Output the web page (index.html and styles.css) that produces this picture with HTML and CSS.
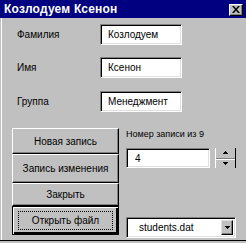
FILE: index.html
```html
<!DOCTYPE html>
<html>
<head>
  <meta charset="UTF-8">
  <title>Козлодуем Ксенон</title>
  <link rel="stylesheet" href="styles.css">
</head>
<body>
  <div class="window">
    <div class="titlebar">
      <span class="title">Козлодуем Ксенон</span>
      <span class="close">
        <svg width="8" height="7" viewBox="0 0 8 7"><path d="M0 0h2l2 2.5L6 0h2L5 3.5 8 7H6L4 4.5 2 7H0l3-3.5z" fill="#000"/></svg>
      </span>
    </div>

    <div class="content">
      <div class="row row1">
        <span class="label">Фамилия</span>
        <div class="field">Козлодуем</div>
      </div>
      <div class="row row2">
        <span class="label">Имя</span>
        <div class="field">Ксенон</div>
      </div>
      <div class="row row3">
        <span class="label">Группа</span>
        <div class="field">Менеджмент</div>
      </div>

      <div class="lower">
        <div class="buttons">
          <div class="btn b1">Новая запись</div>
          <div class="btn b2">Запись изменения</div>
          <div class="btn b3">Закрыть</div>
          <div class="btn b4 default"><span class="focus">Открыть файл</span></div>
        </div>

        <div class="side">
          <span class="side-label">Номер записи из 9</span>
          <div class="counter">
            <div class="field num">4</div>
            <div class="spin">
              <div class="spin-up"><svg width="5" height="3" viewBox="0 0 5 3"><path d="M2 0h1v1h1v1h1v1H0V2h1V1h1z" fill="#000"/></svg></div>
              <div class="spin-down"><svg width="5" height="3" viewBox="0 0 5 3"><path d="M0 0h5v1H4v1H3v1H2V2H1V1H0z" fill="#000"/></svg></div>
            </div>
          </div>
          <div class="combo">
            <span class="combo-text">students.dat</span>
            <span class="combo-btn"><svg width="5" height="3" viewBox="0 0 5 3"><path d="M0 0h5v1H4v1H3v1H2V2H1V1H0z" fill="#000"/></svg></span>
          </div>
        </div>
      </div>
    </div>
  </div>
</body>
</html>
```

FILE: styles.css
```css
body {
  margin: 0;
  background: #c0c0c0;
  font-family: "Liberation Sans", Arial, sans-serif;
  font-size: 9px;
  color: #000;
}

.window {
  width: 246px;
  height: 241px;
  box-sizing: border-box;
  border-bottom: 1px solid #000;
  display: flex;
  flex-direction: column;
}

.titlebar {
  height: 18px;
  background: #000080;
  color: #fff;
  display: flex;
  align-items: center;
  justify-content: space-between;
  padding: 0 3px 0 4px;
}

.title {
  font-weight: bold;
  font-size: 12px;
  letter-spacing: 0.2px;
}

.close {
  width: 14px;
  height: 12px;
  box-sizing: border-box;
  background: #c0c0c0;
  border: 1px solid;
  border-color: #fff #000 #000 #fff;
  box-shadow: inset -1px -1px #808080;
  display: flex;
  align-items: center;
  justify-content: center;
  margin-top: 1px;
}

.content {
  flex: 1;
  margin-left: 1px;
  border-left: 1px solid #fff;
  padding-left: 10px;
  display: flex;
  flex-direction: column;
}

.row {
  display: flex;
  align-items: center;
}

.row1 { margin-top: 6px; }
.row2 { margin-top: 12px; }
.row3 { margin-top: 13px; }

.label {
  width: 88px;
  box-sizing: border-box;
  padding-left: 5px;
  font-size: 10px;
}

.field {
  width: 82px;
  height: 21px;
  box-sizing: border-box;
  background: #fff;
  border: 1px solid;
  border-color: #808080 #fff #fff #808080;
  box-shadow: inset 1px 1px #000, inset -1px -1px #dfdfdf;
  padding-left: 7px;
  display: flex;
  align-items: center;
  white-space: nowrap;
  overflow: hidden;
  font-size: 10px;
}

.lower {
  display: flex;
  margin-top: 16px;
}

.buttons {
  width: 107px;
  display: flex;
  flex-direction: column;
}

.btn {
  box-sizing: border-box;
  background: #c0c0c0;
  border: 1px solid;
  border-color: #fff #000 #000 #fff;
  box-shadow: inset -1px -1px #808080;
  display: flex;
  align-items: center;
  justify-content: center;
  font-size: 10px;
}

.b1 { height: 26px; }
.b2 { height: 29px; }
.b3 { height: 23px; }
.b4 { height: 29px; }

.btn.default {
  border: 1px solid #000;
  box-shadow: inset 1px 1px #fff, inset -2px -2px #000, inset -1px -1px #808080;
  padding: 4px 5px;
}

.focus {
  flex: 1;
  align-self: stretch;
  border: 1px dotted #000;
  display: flex;
  align-items: center;
  justify-content: center;
}

.side {
  margin-left: 7px;
  width: 110px;
  display: flex;
  flex-direction: column;
}

.side-label {
  line-height: 13px;
}

.counter {
  display: flex;
  margin-top: 7px;
}

.field.num {
  width: 84px;
  height: 20px;
  padding-left: 8px;
}

.spin {
  margin-left: 5px;
  width: 21px;
  height: 20px;
  box-sizing: border-box;
  border-left: 1px solid #fff;
  border-right: 1px solid #000;
  display: flex;
  flex-direction: column;
}

.spin-up,
.spin-down {
  flex: 1;
  display: flex;
  align-items: center;
  justify-content: center;
}

.spin-up {
  border-bottom: 1px solid #808080;
  box-shadow: 0 1px #fff;
}

.combo {
  margin-top: 49px;
  height: 21px;
  box-sizing: border-box;
  background: #fff;
  border: 1px solid;
  border-color: #808080 #fff #fff #808080;
  box-shadow: inset 1px 1px #000, inset -1px -1px #dfdfdf;
  display: flex;
  align-items: center;
  padding: 0 2px 0 12px;
  font-size: 10px;
}

.combo-text {
  flex: 1;
}

.combo-btn {
  width: 12px;
  height: 15px;
  box-sizing: border-box;
  background: #c0c0c0;
  border: 1px solid;
  border-color: #dfdfdf #000 #000 #dfdfdf;
  box-shadow: inset -1px -1px #808080;
  display: flex;
  align-items: center;
  justify-content: center;
}
```
